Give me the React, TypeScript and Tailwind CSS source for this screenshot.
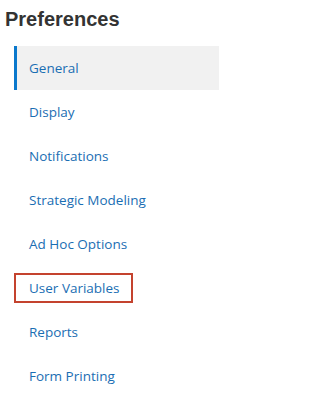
export default function App() {
  const items = [
    "General",
    "Display",
    "Notifications",
    "Strategic Modeling",
    "Ad Hoc Options",
    "User Variables",
    "Reports",
    "Form Printing",
  ];
  return (
    <div className="w-[219px] h-[411px] bg-white overflow-hidden">
      <h1
        className="pl-[5px] pt-[7px] h-[46px] text-[20px] font-bold text-[#333333] leading-[24px]"
        style={{ fontFamily: '"Liberation Sans", Arial, sans-serif' }}
      >
        Preferences
      </h1>
      <ul className="pl-[14px]" style={{ fontFamily: '"Open Sans", sans-serif' }}>
        {items.map((it, i) => (
          <li
            key={it}
            className={
              "h-[44px] flex items-center text-[13.5px] text-[#1a6eb3] " +
              (i === 0 ? "bg-[#f1f1f1] border-l-[3px] border-[#0a78cc] pl-[12px]" : "pl-[15px]")
            }
          >
            {i === 5 ? (
              <span className="-ml-[15px] w-[119px] h-[30px] border-2 border-[#c4432e] flex items-center pl-[13px]">
                {it}
              </span>
            ) : (
              it
            )}
          </li>
        ))}
      </ul>
    </div>
  );
}
